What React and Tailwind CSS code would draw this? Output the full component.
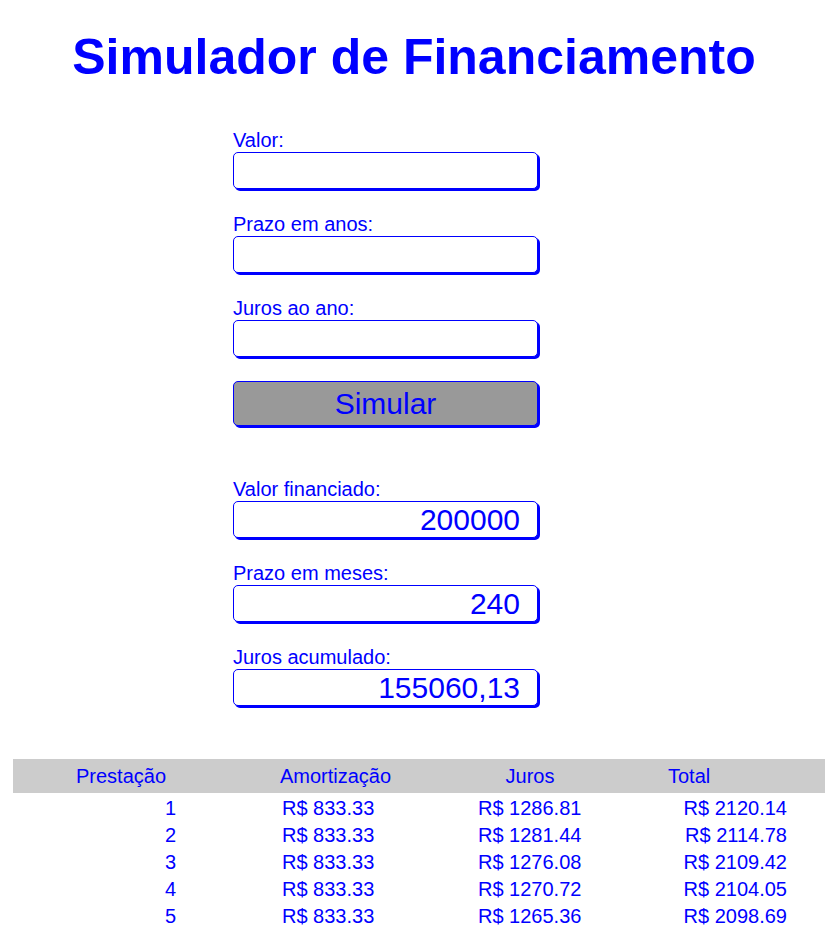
const linhas = [
  { n: 1, amort: "R$ 833.33", juros: "R$ 1286.81", total: "R$ 2120.14" },
  { n: 2, amort: "R$ 833.33", juros: "R$ 1281.44", total: "R$ 2114.78" },
  { n: 3, amort: "R$ 833.33", juros: "R$ 1276.08", total: "R$ 2109.42" },
  { n: 4, amort: "R$ 833.33", juros: "R$ 1270.72", total: "R$ 2104.05" },
  { n: 5, amort: "R$ 833.33", juros: "R$ 1265.36", total: "R$ 2098.69" },
];

const caixa =
  "block w-[305px] h-[37px] border border-[#0000ff] rounded-[5px] shadow-[2px_2px_0_#0000ff] bg-white outline-none text-[#0000ff] text-[30px] text-right pr-[17px]";

function Campo({ label, valor, first }) {
  return (
    <div className={first ? "" : "mt-[24px]"}>
      <label className="block text-[20px] leading-[23px]">{label}</label>
      <input type="text" readOnly value={valor || ""} className={caixa} />
    </div>
  );
}

export default function App() {
  return (
    <div className="min-h-screen bg-white text-[#0000ff] font-['Liberation_Sans',Arial,sans-serif]">
      <h1 className="pt-[29px] pr-[8px] text-center text-[50px] leading-[57px] font-bold">
        Simulador de Financiamento
      </h1>

      <div className="ml-[233px] mt-[43px] w-[305px]">
        <Campo label="Valor:" first />
        <Campo label="Prazo em anos:" />
        <Campo label="Juros ao ano:" />
        <button
          type="button"
          className="block mt-[24px] w-[305px] h-[45px] bg-[#999999] border border-[#0000ff] rounded-[5px] shadow-[2px_2px_0_#0000ff] text-[30px] leading-[43px] text-[#0000ff]"
        >
          Simular
        </button>

        <div className="mt-[52px]">
          <Campo label="Valor financiado:" valor="200000" first />
          <Campo label="Prazo em meses:" valor="240" />
          <Campo label="Juros acumulado:" valor="155060,13" />
        </div>
      </div>

      <div className="ml-[13px] mt-[53px] w-[812px] text-[20px]">
        <div className="grid grid-cols-[216px_213px_176px_207px] bg-[#cccccc] h-[34px] items-center leading-[23px]">
          <div className="text-center">Prestação</div>
          <div className="text-center">Amortização</div>
          <div className="text-center">Juros</div>
          <div className="pl-[50px]">Total</div>
        </div>
        <div className="pt-[2px]">
          {linhas.map((l) => (
            <div key={l.n} className="grid grid-cols-[216px_213px_176px_207px] leading-[27px]">
              <div className="text-right pr-[53px]">{l.n}</div>
              <div className="pl-[53px]">{l.amort}</div>
              <div className="pl-[36px]">{l.juros}</div>
              <div className="text-right pr-[38px]">{l.total}</div>
            </div>
          ))}
        </div>
      </div>
    </div>
  );
}
